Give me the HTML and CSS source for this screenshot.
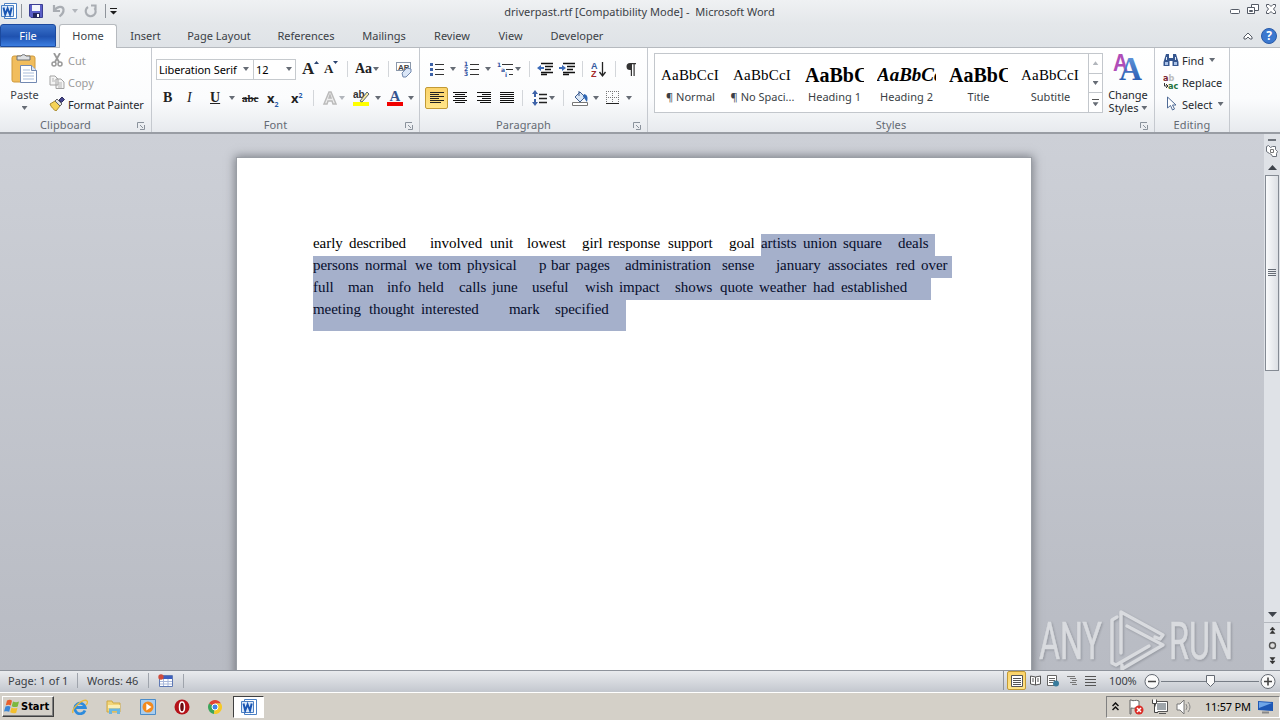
FILE: index.html
```
<!DOCTYPE html>
<html lang="en">
<head>
    <meta charset="UTF-8">
    <meta name="viewport" content="width=device-width, initial-scale=1.0">
    <title>driverpast.rtf - Microsoft Word</title>
    <link rel="stylesheet" href="styles.css">
</head>
<body>
    <!-- shared icons -->
    <svg class="defs" width="0" height="0">
        <defs>
            <linearGradient id="blueGrad" x1="0" y1="0" x2="0" y2="1">
                <stop offset="0" stop-color="#6fa3e4"/><stop offset="1" stop-color="#1d4fa8"/>
            </linearGradient>
            <symbol id="word" viewBox="0 0 16 16">
                <path d="M3.500.5h12v15h-12z" fill="#fff" stroke="#4b80c4"/>
                <path d="M.5 2.500h12v11H.5z" fill="#dceafa" stroke="#4b80c4"/>
                <path d="M2.500 4.500l1.700 7L6.600 5.500 9 11.500l1.700-7" fill="none" stroke="#1a56b3" stroke-width="2"/>
            </symbol>
            <symbol id="launcher" viewBox="0 0 8 8">
                <path d="M.5 6V.5H7" fill="none" stroke="#8a929c"/>
                <path d="M3 3l3 3M7.500 3v4.500H3" fill="none" stroke="#8a929c"/>
            </symbol>
        </defs>
    </svg>

    <div class="window">
        <header class="titlebar">
            <div class="quick">
                <svg width="16" height="16"><use href="#word"/></svg>
                <i class="sep"></i>
                <svg width="14" height="14" viewBox="0 0 14 14"><path d="M.5.5h13v13H2L.5 12z" fill="#5b5fc7" stroke="#3b3f93"/><path d="M3 1h8v6H3z" fill="#f3f6fb"/><path d="M4 9h7v5H4z" fill="#23265f"/><path d="M8 10h2v3H8z" fill="#fff"/></svg>
                <svg width="14" height="14" viewBox="0 0 14 14"><path d="M2 1v6h6M2.500 6.500C5 2 11 1.500 11.500 5.500c.3 3-1.500 5-4 7" fill="none" stroke="#a9adb3" stroke-width="2.200"/></svg>
                <i class="arrow pale"></i>
                <svg width="14" height="14" viewBox="0 0 14 14"><path d="M4 3a5 5 0 1 0 6.500 1M7 1.500h4.500V6" fill="none" stroke="#a9adb3" stroke-width="2.200"/></svg>
                <i class="sep"></i>
                <svg width="8" height="7" viewBox="0 0 8 7"><path d="M0 0h7v1H0zM0 3h7L3.500 6.500z" fill="#1c1c1c"/></svg>
            </div>
            <div class="title">driverpast.rtf [Compatibility Mode] - &nbsp;Microsoft Word</div>
            <div class="winbtns">
                <svg width="50" height="14" viewBox="0 0 50 14"><g fill="#fff" stroke="#555b66"><rect x="1.500" y="6.500" width="9" height="4" rx="1"/><path d="M22.500 1.500h7v6h-7z"/><path d="M18.500 4.500h7v6h-7zM20.500 7.500h3v1h-3z"/><path d="M37.500 1.500h2.500l2 2 2-2h2.500v2L44.500 6l2 2.500v2H44l-2-2-2 2h-2.500v-2l2-2.500-2-2.500z"/></g></svg>
            </div>
        </header>

        <nav class="tabs">
            <div class="tab file">File</div>
            <div class="tab home">Home</div>
            <div class="tab insert">Insert</div>
            <div class="tab layout">Page Layout</div>
            <div class="tab refs">References</div>
            <div class="tab mail">Mailings</div>
            <div class="tab review">Review</div>
            <div class="tab view">View</div>
            <div class="tab dev">Developer</div>
            <div class="help">
                <svg width="10" height="8" viewBox="0 0 10 8"><path d="M1 5l4-4 4 4v2H7L5 5 3 7H1z" fill="#fff" stroke="#555b66"/></svg>
                <span class="question">?</span>
            </div>
        </nav>

        <section class="ribbon">
            <div class="group clipboard">
                <div class="group-body">
                    <div class="paste">
                        <svg width="30" height="32" viewBox="0 0 30 32"><rect x="1" y="3" width="23" height="26" rx="2" fill="#f1bd5d" stroke="#cf9a3d"/><path d="M6 3h4a3 3 0 0 1 5 0h4v4H6z" fill="#dfe1e3" stroke="#6d7176"/><path d="M9.500 12.500h11l5 5v12h-16z" fill="#fff" stroke="#7289b2"/><path d="M20.500 12.500v5h5" fill="#dce7f6" stroke="#7289b2"/><path d="M12 17h7M12 20h11M12 23h11M12 26h11" stroke="#a9bddb"/></svg>
                        <span>Paste</span>
                        <i class="arrow"></i>
                    </div>
                    <div class="clip-list">
                        <div class="cmd off"><svg width="16" height="14" viewBox="0 0 16 14"><path d="M5 0l5 9M11 0L6 9" stroke="#999" stroke-width="1.800"/><circle cx="5" cy="11" r="2" fill="none" stroke="#999" stroke-width="1.500"/><circle cx="11" cy="11" r="2" fill="none" stroke="#999" stroke-width="1.500"/></svg>Cut</div>
                        <div class="cmd off"><svg width="16" height="14" viewBox="0 0 16 14"><path d="M1 1h5l3 3v6H1zM7 4h5l3 3v6.500H7z" fill="#f4f4f4" stroke="#a3a3a3"/><path d="M3 4h2M3 6h3M9 8h4M9 10h4M9 12h4" stroke="#b5b5b5"/></svg>Copy</div>
                        <div class="cmd painter"><svg width="16" height="14" viewBox="0 0 16 14"><path d="M1 7l5-3 5 5-4 5c-2-1-5-4-6-7z" fill="#f5d358" stroke="#a98b31"/><path d="M6 4l2-2 5 5-2 2z" fill="#e2e4ea" stroke="#666"/><path d="M10 3l3-3 2.500 2.500-3 3z" fill="#44458c" stroke="#303060"/></svg>Format Painter</div>
                    </div>
                </div>
                <div class="group-label">Clipboard<svg width="8" height="8"><use href="#launcher"/></svg></div>
            </div>

            <div class="group font">
                <div class="group-body rows">
                    <div class="row font-top">
                        <div class="combo">Liberation Serif<i class="arrow"></i></div>
                        <div class="combo size">12<i class="arrow"></i></div>
                        <span class="glyph grow">A<svg width="5" height="3" viewBox="0 0 5 3"><path d="M0 3h5L2.500 0z" fill="#2a436f"/></svg></span>
                        <span class="glyph shrink">A<svg width="5" height="3" viewBox="0 0 5 3"><path d="M0 0h5L2.500 3z" fill="#2a436f"/></svg></span>
                        <i class="sep"></i>
                        <span class="glyph case">Aa</span>
                        <i class="arrow"></i>
                        <i class="sep"></i>
                        <svg width="17" height="17" viewBox="0 0 17 17"><rect x=".5" y="1.500" width="14" height="8" fill="#fff" stroke="#8b98aa"/><text x="2" y="8.500" class="tiny">AB</text><path d="M6 12l5-5 4 1v3l-5 5H7z" fill="#dae6f7" stroke="#7087ad"/></svg>
                    </div>
                    <div class="row font-bottom">
                        <b class="glyph">B</b>
                        <em class="glyph">I</em>
                        <u class="glyph">U</u>
                        <i class="arrow"></i>
                        <s class="glyph abc">abc</s>
                        <span class="glyph script">x<sub>2</sub></span>
                        <span class="glyph script">x<sup>2</sup></span>
                        <i class="sep"></i>
                        <svg width="16" height="16" viewBox="0 0 16 16"><path d="M2 14L7 2h2l5 12h-3l-1-3H6l-1 3zM7 8h2L8 5z" fill="#eee" stroke="#bbb" stroke-width="1.500"/></svg>
                        <i class="arrow pale"></i>
                        <svg width="18" height="18" viewBox="0 0 18 18"><rect x="0" y="13" width="16" height="4" fill="#ff0"/><text x="0" y="9" class="hl">ab</text><path d="M7 12l7-9 2 2-7 8z" fill="#f7e89b" stroke="#596775"/></svg>
                        <i class="arrow"></i>
                        <svg width="18" height="18" viewBox="0 0 18 18"><rect x="0" y="13" width="16" height="4" fill="#f00000"/><text x="2.500" y="12" class="fc">A</text></svg>
                        <i class="arrow"></i>
                    </div>
                </div>
                <div class="group-label">Font<svg width="8" height="8"><use href="#launcher"/></svg></div>
            </div>

            <div class="group paragraph">
                <div class="group-body rows">
                    <div class="row para-top">
                        <svg width="16" height="14" viewBox="0 0 16 14"><path d="M0 1h3v3H0zM0 6h3v3H0zM0 11h3v3H0z" fill="#3d62a8"/><path d="M5 2.500h9M5 7.500h9M5 12.500h9" stroke="#333"/></svg>
                        <i class="arrow"></i>
                        <svg width="16" height="16" viewBox="0 0 16 16"><text x="0" y="5" class="num">1</text><text x="0" y="10" class="num">2</text><text x="0" y="15" class="num">3</text><path d="M6 3.500h9M6 8.500h9M6 13.500h9" stroke="#333"/></svg>
                        <i class="arrow"></i>
                        <svg width="17" height="16" viewBox="0 0 17 16"><text x="0" y="6" class="num">1</text><text x="4" y="11" class="num">a</text><text x="8" y="16" class="num">i</text><path d="M5 3.500h11M9 8.500h7M12 13.500h4" stroke="#333"/></svg>
                        <i class="arrow"></i>
                        <i class="sep"></i>
                        <svg width="16" height="14" viewBox="0 0 16 14"><path d="M4 1.500h12M8 4.500h8M8 7.500h6M4 10.500h12M4 12.500h6" stroke="#111" stroke-width="1.300"/><path d="M0 6l4-3v2h3v2H4v2z" fill="#3c6bb8"/></svg>
                        <svg width="16" height="14" viewBox="0 0 16 14"><path d="M4 1.500h12M8 4.500h8M8 7.500h6M4 10.500h12M4 12.500h6" stroke="#111" stroke-width="1.300"/><path d="M7 6L3 3v2H0v2h3v2z" fill="#3c6bb8"/></svg>
                        <i class="sep"></i>
                        <svg width="16" height="17" viewBox="0 0 16 17"><text x="0" y="8" class="az">A</text><text x="0" y="16" class="az z">Z</text><path d="M11.500 1v13M8.500 11l3 4 3-4" fill="none" stroke="#222" stroke-width="1.300"/></svg>
                        <i class="sep"></i>
                        <svg width="11" height="13" viewBox="0 0 11 13"><path d="M4 0h6v1.200H8.700V13H7.500V1.200h-1.500V13H4.800V7H4a3.500 3.500 0 0 1 0-7z" fill="#333"/></svg>
                    </div>
                    <div class="row para-bottom">
                        <span class="pressed"><svg width="14" height="12" viewBox="0 0 14 12"><path d="M0 .5h14M0 2.500h9M0 4.500h14M0 6.500h9M0 8.500h14M0 10.500h11" stroke="#222"/></svg></span>
                        <svg width="14" height="12" viewBox="0 0 14 12"><path d="M0 .5h14M2 2.500h10M0 4.500h14M2 6.500h10M0 8.500h14M2 10.500h10" stroke="#111"/></svg>
                        <svg width="14" height="12" viewBox="0 0 14 12"><path d="M0 .5h14M5 2.500h9M0 4.500h14M5 6.500h9M0 8.500h14M3 10.500h11" stroke="#111"/></svg>
                        <svg width="14" height="12" viewBox="0 0 14 12"><path d="M0 .5h14M0 2.500h14M0 4.500h14M0 6.500h14M0 8.500h14M0 10.500h14" stroke="#111"/></svg>
                        <i class="sep"></i>
                        <svg width="16" height="16" viewBox="0 0 16 16"><path d="M3 0l3 4H4v8h2l-3 4-3-4h2V4H0z" fill="#3d62a8"/><path d="M2 7h2v2H2z" fill="#fff"/><path d="M7 4.500h8M7 8.500h8M7 12.500h8" stroke="#222" stroke-width="1.300"/></svg>
                        <i class="arrow"></i>
                        <i class="sep"></i>
                        <svg width="17" height="16" viewBox="0 0 17 16"><path d="M3 7l5-5 5 5-5 5z" fill="#dbe7f5" stroke="#3f5f92"/><path d="M7 6V1" stroke="#3f5f92"/><path d="M12 4c4 1 4 4 3 8-2-2-2-4-4-5z" fill="#2f67b4"/><path d="M.5 12.500h15v3H.5z" fill="#fff" stroke="#777"/></svg>
                        <i class="arrow"></i>
                        <svg width="14" height="14" viewBox="0 0 14 14"><path d="M.5 0v12M6.500 0v12M12.500 0v12M0 .5h13M0 6.500h13" stroke="#777" stroke-dasharray="1 1"/><path d="M0 12.500h13" stroke="#222"/></svg>
                        <i class="arrow"></i>
                    </div>
                </div>
                <div class="group-label">Paragraph<svg width="8" height="8"><use href="#launcher"/></svg></div>
            </div>

            <div class="group styles">
                <div class="group-body">
                    <div class="gallery">
                        <div class="style"><span class="sample">AaBbCcI</span><span>¶ Normal</span></div>
                        <div class="style"><span class="sample">AaBbCcI</span><span>¶ No Spaci...</span></div>
                        <div class="style"><span class="sample big">AaBbC</span><span>Heading 1</span></div>
                        <div class="style"><span class="sample big slant">AaBbCc</span><span>Heading 2</span></div>
                        <div class="style"><span class="sample big">AaBbC</span><span>Title</span></div>
                        <div class="style"><span class="sample">AaBbCcI</span><span>Subtitle</span></div>
                        <div class="spin">
                            <span><i class="arrow up pale"></i></span>
                            <span><i class="arrow"></i></span>
                            <span class="more"><i class="arrow"></i></span>
                        </div>
                    </div>
                    <div class="change">
                        <svg width="30" height="29" viewBox="0 0 30 29"><text x="0" y="18" class="a1" textLength="15" lengthAdjust="spacingAndGlyphs">A</text><text x="6" y="27" class="a2" textLength="23" lengthAdjust="spacingAndGlyphs">A</text></svg>
                        <span>Change</span>
                        <span>Styles <i class="arrow"></i></span>
                    </div>
                </div>
                <div class="group-label">Styles<svg width="8" height="8"><use href="#launcher"/></svg></div>
            </div>

            <div class="group editing">
                <div class="group-body edit-list">
                    <div class="cmd find"><svg width="16" height="14" viewBox="0 0 16 14"><path d="M3 1h3v4h4V1h3l2.500 8v4h-6V8h-3v5h-6V9z" fill="#35568f"/><path d="M2 9h3v3H2zM11 9h3v3h-3z" fill="#a9c1e6"/><path d="M3.500 4v3M12.500 4v3" stroke="#dce7f8"/></svg>Find<i class="arrow"></i></div>
                    <div class="cmd replace"><svg width="17" height="16" viewBox="0 0 17 16"><text x="0" y="7" class="ab">a<tspan fill="#bbb">b</tspan></text><path d="M1.500 9v3h3M3 10l2 2-2 2" fill="none" stroke="#333"/><text x="5" y="15" class="ab ac">ac</text></svg>Replace</div>
                    <div class="cmd select"><svg width="16" height="16" viewBox="0 0 16 16"><path d="M4.500 1v11l3-2.500 2 4.500 2-1-2-4h3.500z" fill="#fff" stroke="#4f6b96"/></svg>Select<i class="arrow"></i></div>
                </div>
                <div class="group-label">Editing</div>
            </div>
        </section>

        <main class="workspace">
            <div class="page">
                <div class="line">
                    <div class="words l1a"><span>early</span><span>described</span><span>involved</span><span>unit</span><span>lowest</span><span>girl</span><span>response</span><span>support</span><span>goal</span></div>
                    <div class="words l1b sel"><span>artists</span><span>union</span><span>square</span><span>deals</span></div>
                </div>
                <div class="words l2 sel"><span>persons</span><span>normal</span><span>we</span><span>tom</span><span>physical</span><span>p</span><span>bar</span><span>pages</span><span>administration</span><span>sense</span><span>january</span><span>associates</span><span>red</span><span>over</span></div>
                <div class="words l3 sel"><span>full</span><span>man</span><span>info</span><span>held</span><span>calls</span><span>june</span><span>useful</span><span>wish</span><span>impact</span><span>shows</span><span>quote</span><span>weather</span><span>had</span><span>established</span></div>
                <div class="words l4 sel"><span>meeting</span><span>thought</span><span>interested</span><span>mark</span><span>specified</span></div>
            </div>
            <aside class="scroll">
                <div class="split"></div>
                <svg class="ruler" width="14" height="14" viewBox="0 0 14 14"><path d="M1.500 2.500l2-1 2 2 2-1h3v3l2 2-1 2v3h-4l-1-2-2-1-3-2z" fill="#fff" stroke="#6b717a"/><path d="M5.500 5.500h3v3h-3z" fill="none" stroke="#777"/></svg>
                <div class="sbtn"><svg width="9" height="5" viewBox="0 0 9 5"><path d="M0 5h9L4.500 0z" fill="#3f444c"/></svg></div>
                <div class="thumb"><i></i><i></i><i></i><i></i></div>
                <div class="track"></div>
                <div class="sbtn"><svg width="9" height="5" viewBox="0 0 9 5"><path d="M0 0h9L4.500 5z" fill="#3f444c"/></svg></div>
                <div class="browse">
                    <svg width="7" height="8" viewBox="0 0 7 8"><path d="M1 4h5L3.500 1zM1 7.500h5L3.500 4.500z" fill="#333" stroke="#333" stroke-width=".5"/></svg>
                    <svg width="9" height="9" viewBox="0 0 9 9"><circle cx="4.500" cy="4.500" r="3" fill="#ddd" stroke="#555" stroke-width="1.400"/></svg>
                    <svg width="7" height="8" viewBox="0 0 7 8"><path d="M1 .5h5L3.500 3.500zM1 4h5L3.500 7z" fill="#333" stroke="#333" stroke-width=".5"/></svg>
                </div>
            </aside>
            <svg class="watermark" width="200" height="68" viewBox="0 0 200 68">
                <text x="3" y="51" textLength="63" lengthAdjust="spacingAndGlyphs">ANY</text>
                <path d="M85 45V4l42 23-3 4-5-2M81 9l-5 3v43l4 2 33-19M91 18l36 19-41 24v-4" fill="none" stroke="#dfe1e4" stroke-width="3.500" stroke-linejoin="round" stroke-linecap="round"/>
                <text x="133" y="51" textLength="64" lengthAdjust="spacingAndGlyphs">RUN</text>
            </svg>
        </main>

        <footer class="status">
            <span class="pages">Page: 1 of 1</span>
            <span class="count">Words: 46</span>
            <span class="macro"><svg width="16" height="14" viewBox="0 0 16 14"><path d="M1.500 1.500h13v11h-13z" fill="#fff" stroke="#5f79b4"/><path d="M2 2h12v3H2z" fill="#3d5fc0"/><path d="M2 7.500h12M2 10h12M5.500 5v7M10 5v7" stroke="#a8b7da"/><circle cx="3" cy="3" r="2.700" fill="#cf4a3b"/></svg></span>
            <div class="views">
                <span class="pressed"><svg width="12" height="12" viewBox="0 0 12 12"><path d="M.5.5h11v11H.5z" fill="#fff" stroke="#555"/><path d="M2 3.500h8M2 5.500h8M2 7.500h8M2 9.500h8" stroke="#555"/></svg></span>
                <svg width="12" height="11" viewBox="0 0 12 11"><path d="M.5 1l5 1 5-1v8l-5 1-5-1z" fill="#fff" stroke="#555"/><path d="M5.500 2v8M2 4h2M2 6h2M7 4h2M7 6h2" stroke="#555"/></svg>
                <svg width="13" height="12" viewBox="0 0 13 12"><path d="M.5.5h9v10h-9z" fill="#fff" stroke="#666"/><path d="M2 3.500h6M2 5.500h6M2 7.500h4" stroke="#666"/><circle cx="9" cy="8.500" r="3" fill="#397b9c"/></svg>
                <svg width="11" height="10" viewBox="0 0 11 10"><path d="M0 .5h8M3 2.500h6M5 4.500h5M3 6.500h6M5 8.500h5" stroke="#777"/></svg>
                <svg width="11" height="10" viewBox="0 0 11 10"><path d="M0 .5h11M0 3.500h11M0 6.500h11M0 9.500h11" stroke="#555"/></svg>
            </div>
            <span class="percent">100%</span>
            <svg class="zoomer" width="134" height="20" viewBox="0 0 134 20"><path d="M18 10.500h98" stroke="#777d86"/><path d="M67.500 7v7" stroke="#777d86"/><g fill="#fafafa" stroke="#646a73"><circle cx="9" cy="10.500" r="7"/><circle cx="125" cy="10.500" r="7"/><path d="M63.500 4.500h8v7l-4 4-4-4z"/></g><path d="M5 10.500h8M121 10.500h8M125 6.500v8" stroke="#444" stroke-width="1.600"/></svg>
        </footer>

        <div class="taskbar">
            <div class="start"><svg width="16" height="15" viewBox="0 0 16 15"><path d="M3 1.500c2-1 4-1 5 .3L6.800 6.500c-1.500-1-3-1-5-.2z" fill="#e8602c"/><path d="M9 2.500c2 1 4 1 6 0l-1.300 5c-2 1-4 .6-6-.3z" fill="#7cb83e"/><path d="M1.500 7.500c2-1 4-.7 5 .2l-1.300 5C4 12 2 12 0 12.600z" fill="#3a86d6"/><path d="M7.500 8.500c2 1 4 1.200 6 .2l-1.300 5c-2 1-4 .5-6-.4z" fill="#f3bf2d"/></svg>Start</div>
            <svg width="16" height="16" viewBox="0 0 16 16"><path d="M13 11.500A5.300 5.300 0 1 1 13.300 8.500H4" fill="none" stroke="#2e8bdc" stroke-width="2.800"/><path d="M1 14C-1 10 12-2 15 2c1 1 0 3-1 4" fill="none" stroke="#e8b93c" stroke-width="1.400"/></svg>
            <svg width="16" height="16" viewBox="0 0 16 16"><path d="M1 2h5l1 2h7v9H1z" fill="#f2d578" stroke="#cda944"/><path d="M2 6h12v3H2z" fill="#fbeeb4"/><path d="M3 15V9.500h11V15h-3v-3H6v3z" fill="#69b6e2"/></svg>
            <svg width="16" height="16" viewBox="0 0 16 16"><path d="M.5.5h15v15H.5z" fill="#a9cdee" stroke="#4b8cc9"/><circle cx="8" cy="8" r="5.500" fill="#f28a1e"/><path d="M6.300 4.500L11.500 8l-5.200 3.500z" fill="#fff"/></svg>
            <svg width="16" height="16" viewBox="0 0 16 16"><circle cx="8" cy="8" r="7.500" fill="#b51219"/><ellipse cx="8" cy="8" rx="2.500" ry="5" fill="#6c0b10" stroke="#fff" stroke-width="1.500"/></svg>
            <svg width="14" height="14" viewBox="0 0 14 14"><path d="M7 7L1 3.500A7 7 0 0 1 13 3.500H7z" fill="#e34334"/><path d="M7 7l-1 7A7 7 0 0 1 1 3.500z" fill="#3ba55a"/><path d="M7 7V3.500h6A7 7 0 0 1 6 14z" fill="#f6c927"/><circle cx="7" cy="7" r="3" fill="#4285e8" stroke="#fff"/></svg>
            <div class="task"><svg width="16" height="16"><use href="#word"/></svg></div>
            <div class="tray">
                <svg width="7" height="9" viewBox="0 0 7 9"><path d="M.5 4l3-3 3 3M.5 8l3-3 3 3" fill="none" stroke="#111" stroke-width="1.500"/></svg>
                <svg width="16" height="16" viewBox="0 0 16 16"><path d="M2 15V1h1c3 2 4-1 8 1v7c-3-1-4 1-8 0v6z" fill="#fff" stroke="#666"/><circle cx="11" cy="11" r="4.500" fill="#da2d27"/><path d="M9 9l4 4M13 9l-4 4" stroke="#fff" stroke-width="1.500"/></svg>
                <svg width="16" height="16" viewBox="0 0 16 16"><path d="M4.500 3.500h10v8h-10z" fill="#9ea5aa" stroke="#fff"/><path d="M3.500 2.500h12v10h-12zM7 14.500h7" fill="none" stroke="#555"/><path d="M.5.5v4h4v-4M2.500 4.500v9H6" fill="#fff" stroke="#444"/></svg>
                <svg width="16" height="16" viewBox="0 0 16 16"><path d="M1 5h3l4-4v14l-4-4H1z" fill="#fff" stroke="#777"/><path d="M10 5q2 3 0 6M12 3q4 5 0 10" fill="none" stroke="#888"/></svg>
                <span class="clock">11:57 PM</span>
                <svg width="16" height="14" viewBox="0 0 16 14"><path d="M0 1l15 1v9l-15-1z" fill="#1e58b5"/><path d="M1 2l13 1-13 5z" fill="#6fa6e8"/><path d="M4 12.500h7" stroke="#888" stroke-width="2"/></svg>
            </div>
        </div>
    </div>
</body>
</html>
```
FILE: styles.css
```
* {
    box-sizing: border-box;
}

body {
    margin: 0;
    font-family: "Noto Sans", "Open Sans", sans-serif;
    font-size: 11px;
    color: #3b3f46;
    overflow: hidden;
}

.defs {
    position: absolute;
}

svg {
    display: block;
    flex: none;
}

.window {
    width: 1280px;
    height: 720px;
    display: flex;
    flex-direction: column;
}

/* small shared bits */
.arrow {
    display: inline-block;
    width: 6px;
    height: 4px;
    background: #666c75;
    clip-path: polygon(0 0, 100% 0, 50% 100%);
    flex: none;
}

.arrow.pale {
    background: #b2b6bc;
}

.arrow.up {
    clip-path: polygon(50% 0, 100% 100%, 0 100%);
}

.sep {
    width: 1px;
    height: 16px;
    background: #d3d6da;
}

/* title bar */
.titlebar {
    height: 24px;
    display: grid;
    grid-template-columns: 500px 279px 1fr;
    align-items: center;
    background: linear-gradient(#eff1f3, #e4e7ea);
}

.quick {
    display: grid;
    grid-template-columns: 20px 8px 23px 20px 12px 21px 5px 10px;
    align-items: center;
    padding: 0 0 2px 1px;
}

.quick .sep {
    background: #8f949b;
    height: 14px;
}

.title {
    text-align: center;
    white-space: nowrap;
    padding-bottom: 2px;
}

.winbtns {
    justify-self: end;
    width: 51px;
    padding-bottom: 5px;
}

/* ribbon tabs */
.tabs {
    height: 24px;
    display: flex;
    background: linear-gradient(#e4e7ea, #dfe3e7);
    border-bottom: 1px solid #b6babf;
}

.tab {
    height: 24px;
    line-height: 24px;
    text-align: center;
    white-space: nowrap;
}

.file {
    width: 56px;
    height: 23px;
    margin-right: 3px;
    color: #fff;
    background: linear-gradient(#3c74cb, #1f52b0 55%, #3b7de0);
    border: 1px solid #1c4a9e;
    border-radius: 3px 3px 0 0;
    line-height: 22px;
}

.home {
    width: 58px;
    background: #fff;
    border: 1px solid #b6babf;
    border-bottom: 0;
    border-radius: 3px 3px 0 0;
    line-height: 22px;
}

.insert { width: 57px; }
.layout { width: 90px; }
.refs { width: 84px; }
.mail { width: 72px; }
.review { width: 64px; }
.view { width: 53px; }
.dev { width: 80px; }

.help {
    margin-left: auto;
    display: flex;
    align-items: center;
    gap: 8px;
    padding-right: 3px;
}

.question {
    width: 16px;
    height: 16px;
    border-radius: 50%;
    background: #3b78cf;
    border: 1px solid #2a5ba8;
    color: #fff;
    font-weight: bold;
    font-size: 12px;
    line-height: 14px;
    text-align: center;
}

/* ribbon */
.ribbon {
    height: 86px;
    display: flex;
    background: linear-gradient(#fff, #fbfcfd 60%, #e7eaee);
    border-bottom: 2px solid #999da4;
}

.group {
    display: flex;
    flex-direction: column;
    border-right: 1px solid #c5c9cf;
}

.group-body {
    height: 69px;
    display: flex;
}

.group-label {
    height: 15px;
    line-height: 15px;
    text-align: center;
    color: #646a73;
    letter-spacing: 0.1px;
    position: relative;
    padding-right: 20px;
}

.group-label svg {
    position: absolute;
    right: 6px;
    top: 5px;
}

.clipboard { width: 152px; }
.font { width: 268px; }
.paragraph { width: 228px; }
.styles { width: 507px; }
.editing { width: 75px; }
.editing .group-label { padding: 0; }

.paste {
    width: 49px;
    display: flex;
    flex-direction: column;
    align-items: center;
    padding-top: 5px;
}

.paste svg {
    margin-left: 3px;
}

.paste span {
    line-height: 20px;
    height: 21px;
}

.cmd {
    height: 22px;
    display: flex;
    align-items: center;
    gap: 3px;
    white-space: nowrap;
    color: #26292e;
}

.cmd .arrow {
    margin-left: 2px;
}

.painter {
    letter-spacing: -0.12px;
}

.off {
    color: #9b9b9b;
}

.clip-list {
    padding-top: 1px;
}

.rows {
    flex-direction: column;
}

.row {
    display: grid;
    align-items: center;
}

.font-top, .para-top {
    height: 42px;
}

.font-bottom, .para-bottom {
    height: 24px;
    margin-top: -4px;
}

.font-top {
    padding-left: 4px;
    grid-template-columns: 98px 48px 22px 23px 8px 18px 15px 8px 20px;
}

.font-bottom {
    padding-left: 11px;
    grid-template-columns: 24px 23px 19px 13px 25px 24px 22px 9px 17px 14px 22px 12px 21px 8px;
}

.para-top {
    padding-left: 10px;
    grid-template-columns: 20px 14px 21px 12px 18px 14px 8px 22px 23px 9px 24px 11px 14px;
}

.para-bottom {
    padding-left: 5px;
    grid-template-columns: 28px 24px 23px 22px 10px 17px 14px 9px 21px 13px 20px 10px;
}

.combo {
    height: 21px;
    border: 1px solid #c6cace;
    background: #fff;
    color: #000;
    display: flex;
    align-items: center;
    justify-content: space-between;
    padding: 0 4px 0 2px;
    white-space: nowrap;
    letter-spacing: -0.05px;
}

.size {
    width: 43px;
    margin-left: -1px;
    padding-right: 3px;
}

.glyph {
    font-family: "Liberation Serif", serif;
    font-size: 14px;
    line-height: 16px;
    color: #222;
}

.grow, .shrink {
    display: flex;
    font-weight: bold;
    font-size: 17px;
}

.shrink {
    font-size: 13px;
}

.case {
    font-weight: bold;
}

.font-bottom b {
    font-weight: bold;
}

.font-bottom u {
    font-weight: bold;
}

.abc {
    font-weight: bold;
    font-size: 11px;
}

.script {
    font-family: "Noto Sans", sans-serif;
    font-weight: bold;
    font-size: 13px;
}

.script sub, .script sup {
    font-size: 7px;
    color: #2959a8;
    line-height: 0;
}

.tiny { font: bold 8px "Liberation Sans", sans-serif; fill: #444; }
.hl { font: bold 10px "Liberation Sans", sans-serif; fill: #333; }
.fc { font: bold 15px "Liberation Serif", serif; fill: #35548f; }
.num { font: bold 6px "DejaVu Sans", sans-serif; fill: #3153a0; }
.az { font: bold 9px "Liberation Sans", sans-serif; fill: #34599f; }
.z { fill: #a32a2a; }
.a1 { font: bold 24px "Liberation Sans", sans-serif; fill: #b04db8; }
.a2 { font: bold 34px "Liberation Serif", serif; fill: url(#blueGrad); }
.ab { font: bold 9px "DejaVu Sans Condensed", "DejaVu Sans", sans-serif; fill: #7b2632; }
.ac { fill: #26733d; }

.pressed {
    width: 23px;
    height: 22px;
    display: flex;
    align-items: center;
    justify-content: center;
    background: linear-gradient(#fbd36a, #ffe58a);
    border: 1px solid #c29a35;
    border-radius: 2px;
}

/* style gallery */
.gallery {
    width: 449px;
    height: 60px;
    margin: 5px 0 0 6px;
    display: flex;
    background: #fff;
    border: 1px solid #c3c7cc;
}

.style {
    width: 72px;
    padding: 8px 7px 0 6px;
    display: flex;
    flex-direction: column;
    align-items: center;
    white-space: nowrap;
}

.style span:last-child {
    padding-top: 1px;
}

.sample {
    width: 59px;
    height: 26px;
    line-height: 26px;
    overflow: hidden;
    color: #000;
    font-family: "Liberation Serif", serif;
    font-size: 15px;
    letter-spacing: 0.2px;
}

.big {
    font-size: 20px;
    font-weight: bold;
    letter-spacing: 0;
}

.slant {
    font-size: 19px;
    font-style: italic;
}

.spin {
    margin-left: auto;
    width: 14px;
    display: flex;
    flex-direction: column;
}

.spin span {
    flex: 1;
    display: flex;
    align-items: center;
    justify-content: center;
    border-left: 1px solid #c3c7cc;
    border-bottom: 1px solid #c3c7cc;
}

.spin .more {
    flex-direction: column;
    gap: 2px;
    border-bottom: 0;
}

.more::before {
    content: "";
    width: 7px;
    height: 1px;
    background: #555;
}

.change {
    width: 50px;
    display: flex;
    flex-direction: column;
    align-items: center;
    line-height: 13px;
    padding-top: 5px;
    color: #26292e;
}

.change svg {
    margin-bottom: 6px;
}

.change .arrow {
    vertical-align: 2px;
}

.edit-list {
    flex-direction: column;
    padding: 1px 0 0 8px;
}

.replace {
    gap: 2px;
}

/* document */
.workspace {
    height: 536px;
    display: flex;
    justify-content: space-between;
    position: relative;
    background: linear-gradient(#cdd0d7, #b8bbc3);
    overflow: hidden;
}

.page {
    width: 794px;
    height: 560px;
    margin: 24px 0 0 237px;
    padding: 76px 0 0 76px;
    background: #fff;
    box-shadow: 0 0 0 1px #9a9ea5, 0 0 9px 2px rgba(70, 74, 82, 0.6);
    font-family: "Liberation Serif", serif;
    font-size: 15px;
    color: #000;
}

.line {
    display: flex;
}

.words {
    display: grid;
    height: 22px;
    line-height: 18px;
    white-space: nowrap;
    letter-spacing: -0.05px;
}

.sel {
    background: #a5b0cb;
    color: #050d2b;
}

.l1a { grid-template-columns: 36px 81px 60px 37px 55px 26px 60px 61px 32px; width: 448px; }
.l1b { grid-template-columns: 42px 40px 55px 37px; width: 174px; }
.l2 { grid-template-columns: 52px 50px 23px 29px 72px 12px 25px 49px 97px 54px 52px 68px 25px 31px; width: 639px; }
.l3 { grid-template-columns: 35px 39px 31px 41px 33px 40px 53px 34px 56px 45px 39px 54px 28px 90px; width: 618px; }
.l4 { grid-template-columns: 56px 52px 88px 46px 71px; width: 313px; height: 31px; }

/* scroll bar */
.scroll {
    width: 16px;
    display: flex;
    flex-direction: column;
    align-items: center;
    background: #dfe2e7;
}

.split {
    width: 8px;
    height: 2px;
    margin: 5px 0 3px;
    background: #6f747c;
}

.ruler {
    margin-bottom: 1px;
}

.sbtn {
    width: 16px;
    height: 16px;
    display: flex;
    align-items: center;
    justify-content: center;
}

.thumb {
    width: 14px;
    height: 196px;
    display: flex;
    flex-direction: column;
    align-items: center;
    justify-content: center;
    gap: 1px;
    padding-bottom: 2px;
    background: linear-gradient(90deg, #fafbfc, #dcdfe4);
    border: 1px solid #858b94;
}

.thumb i {
    width: 8px;
    height: 1px;
    background: #666c75;
}

.track {
    flex: 1;
}

.browse {
    width: 16px;
    height: 48px;
    display: flex;
    flex-direction: column;
    align-items: center;
    justify-content: space-around;
    padding-bottom: 2px;
    border-top: 1px solid #b4b8bf;
}

.watermark {
    position: absolute;
    left: 1036px;
    top: 474px;
    opacity: 0.85;
    filter: drop-shadow(1px 1px 1px rgba(100, 104, 112, 0.5));
}

.watermark text {
    font: 51px Roboto, sans-serif;
    fill: #dfe1e4;
    stroke: #dfe1e4;
    stroke-width: 0.6;
}

/* status bar */
.status {
    height: 23px;
    display: flex;
    align-items: center;
    background: linear-gradient(#e9ebee, #c3c7ce);
    border-top: 1px solid #8e939b;
    border-bottom: 1px solid #fff;
    padding-bottom: 2px;
}

.pages {
    width: 78px;
    padding-left: 8px;
    border-right: 1px solid #9fa4ac;
}

.count {
    width: 71px;
    padding-left: 9px;
    border-right: 1px solid #9fa4ac;
}

.macro {
    width: 35px;
    padding-left: 9px;
    border-right: 1px solid #9fa4ac;
}

.views {
    margin-left: auto;
    display: grid;
    grid-template-columns: 23px 17px 20px 18px 17px;
    align-items: center;
    padding-left: 3px;
    border-left: 1px solid #8f949c;
}

.views .pressed {
    width: 19px;
    height: 19px;
}

.percent {
    width: 34px;
    margin-left: 7px;
    letter-spacing: -0.1px;
}

.zoomer {
    margin-right: 3px;
}

/* taskbar */
.taskbar {
    height: 27px;
    display: grid;
    grid-template-columns: 70px 34px 34px 34px 34px 25px 873px 174px;
    align-items: center;
    padding-left: 2px;
    background: #d4d0c8;
}

.start {
    width: 52px;
    height: 21px;
    display: flex;
    align-items: center;
    gap: 1px;
    padding-left: 1px;
    font-family: "DejaVu Sans Condensed", "DejaVu Sans", sans-serif;
    font-weight: bold;
    font-size: 11px;
    color: #000;
    border: 1px solid;
    border-color: #fff #404040 #404040 #fff;
    box-shadow: inset -1px -1px #808080;
}

.task {
    width: 31px;
    height: 22px;
    display: flex;
    align-items: center;
    justify-content: center;
    background: #fff;
    border: 1px solid;
    border-color: #404040 #fff #fff #404040;
}

.tray {
    height: 22px;
    display: grid;
    grid-template-columns: 16px 24px 24px 29px 53px 17px;
    align-items: center;
    padding-left: 5px;
    border: 1px solid;
    border-color: #808080 #fff #fff #808080;
    color: #000;
}

.clock {
    white-space: nowrap;
    letter-spacing: -0.25px;
}
```
